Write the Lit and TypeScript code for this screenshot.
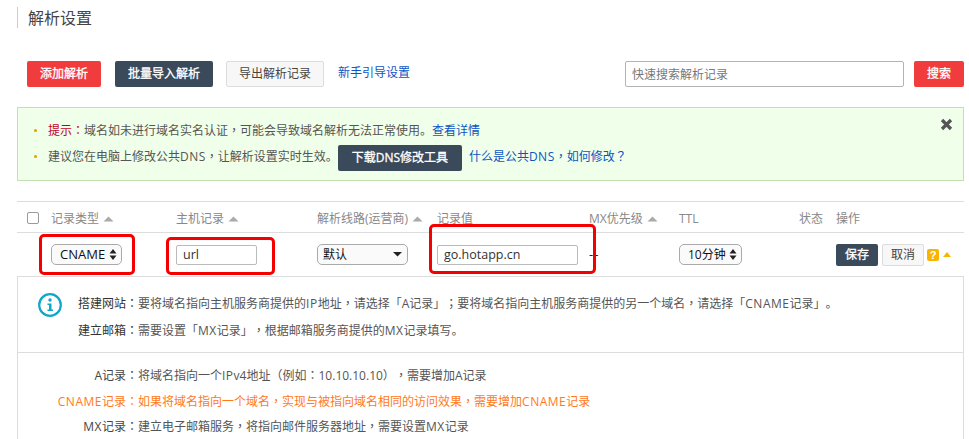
import { LitElement, html, css, svg } from "lit";
import { customElement } from "lit/decorators.js";

const caret = html`<svg class="caret" width="11" height="6" viewBox="0 0 11 6"><path d="M5.5 0.5 L10.5 5.5 H0.5 Z" fill="currentColor"/></svg>`;
const updown = svg`<path d="M4 0 L7.5 4.5 H0.5 Z M0.5 6.5 H7.5 L4 11 Z" fill="#222"/>`;
const down = svg`<path d="M0 0 H9 L4.5 4.5 Z" fill="#222"/>`;

/* Full-width punctuation sits centred in its cell in the reference, and capitals run a little wider. */
const t = (s: string) =>
  s.split(/([，：（）；？]|[A-Z]{2,})/).map((part) =>
    /^[，：（）；？]$/.test(part)
      ? html`<span class="p">${part}</span>`
      : /^[A-Z]{2,}$/.test(part)
        ? html`<span class="caps">${part}</span>`
        : part
  );

@customElement("app-root")
export class AppRoot extends LitElement {
  static styles = css`
    :host {
      display: flex;
      flex-direction: column;
      height: 439px;
      overflow: hidden;
      position: relative;
      background: #fff;
      color: #555;
      font: 12px/1.5 "Open Sans", "Noto Sans CJK SC", sans-serif;
      text-spacing-trim: space-all;
      font-feature-settings: "chws" 0;
    }
    * { box-sizing: border-box; }
    .p { font-family: "Noto Sans CJK TC", sans-serif; }
    .caps { letter-spacing: 0.5px; }
    a { color: #0b55c4; text-decoration: none; }
    .title {
      flex: none;
      margin: 7px 0 0 17px;
      height: 21px;
      padding-left: 10px;
      border-left: 1px solid #ccc;
      font-size: 16px;
      line-height: 22px;
      color: #444;
    }
    .toolbar {
      flex: none;
      display: flex;
      align-items: center;
      margin: 33px 5px 0 27px;
      height: 26px;
    }
    .btn {
      display: inline-flex;
      align-items: center;
      justify-content: center;
      height: 26px;
      border: 1px solid transparent;
      border-radius: 2px;
      font: inherit;
      padding: 0;
      white-space: nowrap;
    }
    .red { background: #f03c3c; color: #fff; -webkit-text-stroke: 0.3px #fff; }
    .dark { background: #3a4a5b; color: #fff; -webkit-text-stroke: 0.3px #fff; }
    .light { background: #f7f7f7; border-color: #ddd; color: #444; }
    .add { width: 74px; margin-right: 14px; }
    .bulk { width: 98px; margin-right: 13px; }
    .export { width: 98px; margin-right: 14px; }
    .guide { margin-top: -2px; }
    .search {
      width: 279px;
      height: 26px;
      margin-left: auto;
      padding: 0 6px;
      border: 1px solid #b4b4b4;
      border-radius: 2px;
      font: inherit;
      color: #555;
    }
    .search::placeholder { color: #777; opacity: 1; }
    .go { width: 50px; margin-left: 10px; }
    .alert {
      flex: none;
      position: relative;
      margin: 20px 5px 0 17px;
      height: 74px;
      padding: 10px 16px;
      background: #f0ffe9;
      border: 1px solid #c5dfb4;
    }
    .alert-line {
      display: flex;
      align-items: center;
      height: 25px;
    }
    .alert-line.tall { height: 27px; }
    .dot {
      width: 3px;
      height: 3px;
      margin-right: 11px;
      border-radius: 50%;
      background: #dca200;
      flex: none;
    }
    .hint { color: #c4002a; }
    .dl { width: 124px; margin: 3px 7px 0 0; }
    .close {
      position: absolute;
      right: 10px;
      top: 10px;
    }
    .grid {
      flex: none;
      display: grid;
      grid-template-columns: 34px 125px 141px 120px 152px 90px 120px 37px 1fr;
      margin: 0 5px 0 17px;
      align-items: center;
    }
    .head {
      margin-top: 20px;
      height: 32px;
      padding-top: 3px;
      border-top: 1px solid #ddd;
      border-bottom: 1px solid #ddd;
      color: #888;
    }
    .head > span { display: flex; align-items: center; gap: 4px; white-space: nowrap; }
    .caret { color: #aaa; flex: none; }
    .check {
      width: 12px;
      height: 12px;
      margin: -1px 0 0 10px;
      border: 1px solid #999;
      border-radius: 2px;
      background: #fff;
    }
    .row { height: 43px; color: #222; }
    .pick { position: relative; display: inline-flex; height: 21px; }
    .pick select {
      appearance: none;
      -webkit-appearance: none;
      height: 21px;
      width: 100%;
      padding: 0 0 0 8px;
      border: 1px solid #aaa;
      border-radius: 5px;
      background: #fafafa;
      font: inherit;
      font-size: 13px;
      color: #111;
    }
    .pick svg { position: absolute; right: 5px; top: 5px; }
    .pick.flat svg { top: 8px; right: 6px; }
    .pick.flat select { padding-left: 5px; font-size: 12px; }
    .type { width: 71px; }
    .line { width: 91px; }
    .ttl { width: 63px; }
    .ttl select { font-size: 12px; }
    .field {
      display: block;
      height: 20px;
      padding: 0 6px;
      border: 1px solid #bbb;
      border-radius: 2px;
      font: inherit;
      font-size: 12.5px;
      color: #333;
      background: #fff;
    }
    .host { width: 81px; }
    .value { width: 141px; }
    .dash { letter-spacing: 1px; font-size: 13px; }
    .ops { display: flex; align-items: center; grid-column: 9; }
    .ops .btn { height: 22px; width: 42px; }
    .ops .light { margin-left: 4px; color: #444; }
    .help {
      width: 12px;
      height: 12px;
      margin-left: 3px;
      border-radius: 2px;
      background: #f7b500;
      color: #fff;
      font: bold 11px/12px "Liberation Sans", sans-serif;
      text-align: center;
    }
    .ops .caret { color: #f7b500; margin-left: 4px; }
    .panel {
      flex: 1 1 0;
      min-height: 0;
      margin: 0 5px 0 17px;
      border-style: solid;
      border-color: #ddd;
      border-width: 1px 1px 0 1px;
    }
    .guide-box {
      display: flex;
      height: 76px;
      padding: 13px 0 0 20px;
      border-bottom: 1px solid #ddd;
    }
    .info { flex: none; margin: 3px 16px 0 0; }
    .guide-box p { margin: 0; line-height: 26px; color: #555; }
    .guide-box b { font-weight: 400; color: #333; }
    .types {
      display: grid;
      grid-template-columns: 120px 1fr;
      padding-top: 10px;
      line-height: 24.5px;
    }
    .types > span:nth-child(odd) { text-align: right; color: #444; }
    .types > span.on { color: #ff7a1a; }
    .mark {
      position: absolute;
      border: 3px solid #f40000;
      border-radius: 5px;
      pointer-events: none;
    }
    .m1 { left: 39px; top: 234px; width: 96px; height: 41px; }
    .m2 { left: 166px; top: 237px; width: 109px; height: 38px; }
    .m3 { left: 429px; top: 224px; width: 167px; height: 50px; }
  `;

  render() {
    return html`
      <div class="title">解析设置</div>
      <div class="toolbar">
        <button class="btn red add">添加解析</button>
        <button class="btn dark bulk">批量导入解析</button>
        <button class="btn light export">导出解析记录</button>
        <a class="guide" href="#">新手引导设置</a>
        <input class="search" placeholder="快速搜索解析记录" />
        <button class="btn red go">搜索</button>
      </div>
      <div class="alert">
        <div class="alert-line">
          <i class="dot"></i><span><span class="hint">${t("提示：")}</span>${t("域名如未进行域名实名认证，可能会导致域名解析无法正常使用。")}<a href="#">查看详情</a></span>
        </div>
        <div class="alert-line tall">
          <i class="dot"></i><span>${t("建议您在电脑上修改公共DNS，让解析设置实时生效。")}</span>
          <button class="btn dark dl">下载DNS修改工具</button>
          <a href="#">${t("什么是公共DNS，如何修改？")}</a>
        </div>
        <svg class="close" width="13" height="13" viewBox="0 0 13 13"><path d="M2 2 L11 11 M11 2 L2 11" stroke="#555" stroke-width="3.2"/></svg>
      </div>
      <div class="grid head">
        <i class="check"></i>
        <span>记录类型 ${caret}</span>
        <span>主机记录 ${caret}</span>
        <span>解析线路(运营商) ${caret}</span>
        <span>记录值</span>
        <span>MX优先级 ${caret}</span>
        <span>TTL</span>
        <span>状态</span>
        <span>操作</span>
      </div>
      <div class="grid row">
        <span></span>
        <span class="pick type"><select><option>CNAME</option></select><svg width="8" height="11" viewBox="0 0 8 11">${updown}</svg></span>
        <input class="field host" value="url" />
        <span class="pick flat line"><select><option>默认</option></select><svg width="9" height="5" viewBox="0 0 9 5">${down}</svg></span>
        <input class="field value" value="go.hotapp.cn" />
        <span class="dash">--</span>
        <span class="pick ttl"><select><option>10分钟</option></select><svg width="8" height="11" viewBox="0 0 8 11">${updown}</svg></span>
        <span class="ops">
          <button class="btn dark">保存</button>
          <button class="btn light">取消</button>
          <span class="help">?</span>
          <svg class="caret" width="8" height="5" viewBox="0 0 8 5"><path d="M4 0 L8 5 H0 Z" fill="currentColor"/></svg>
        </span>
      </div>
      <div class="panel">
        <div class="guide-box">
          <svg class="info" width="24" height="24" viewBox="0 0 24 24">
            <circle cx="12" cy="12" r="10.8" fill="none" stroke="#12a6c8" stroke-width="2.2"/>
            <circle cx="12" cy="7" r="1.7" fill="#12a6c8"/>
            <path d="M9.5 10.5 H13.5 V16.5 H15 V18 H9.5 V16.5 H11 V12 H9.5 Z" fill="#12a6c8"/>
          </svg>
          <div>
            <p><b>${t("搭建网站：")}</b>${t("要将域名指向主机服务商提供的IP地址，请选择「A记录」；要将域名指向主机服务商提供的另一个域名，请选择「CNAME记录」。")}</p>
            <p><b>${t("建立邮箱：")}</b>${t("需要设置「MX记录」，根据邮箱服务商提供的MX记录填写。")}</p>
          </div>
        </div>
        <div class="types">
          <span>${t("A记录：")}</span><span>${t("将域名指向一个IPv4地址（例如：10.10.10.10），需要增加A记录")}</span>
          <span class="on">${t("CNAME记录：")}</span><span class="on">${t("如果将域名指向一个域名，实现与被指向域名相同的访问效果，需要增加CNAME记录")}</span>
          <span>${t("MX记录：")}</span><span>${t("建立电子邮箱服务，将指向邮件服务器地址，需要设置MX记录")}</span>
        </div>
      </div>
      <i class="mark m1"></i><i class="mark m2"></i><i class="mark m3"></i>
    `;
  }
}
